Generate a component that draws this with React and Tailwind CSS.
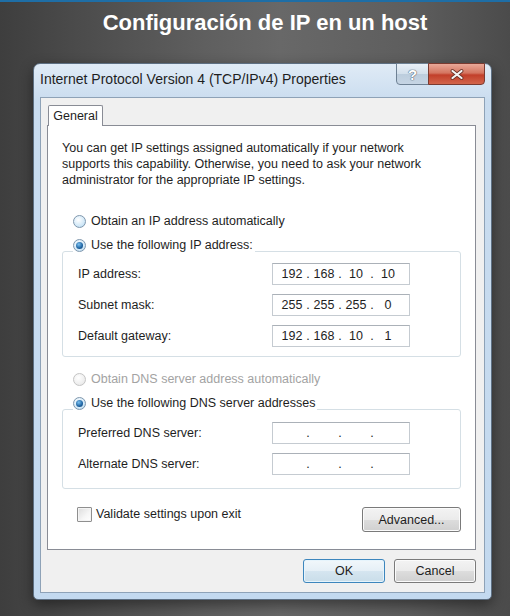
import React from "react";

const Radio = ({ checked, disabled }) => (
  <span
    className={
      disabled
        ? "inline-flex h-[13px] w-[13px] shrink-0 items-center justify-center rounded-full border border-[#c4c4c4] bg-[radial-gradient(circle_at_40%_35%,#ffffff,#ececec_70%,#e0e0e0)]"
        : "inline-flex h-[13px] w-[13px] shrink-0 items-center justify-center rounded-full border border-[#7f97ad] bg-[radial-gradient(circle_at_40%_35%,#ffffff,#cfe7f7_65%,#a9d0ea)]"
    }
  >
    {checked && (
      <span className="h-[7px] w-[7px] rounded-full bg-[radial-gradient(circle_at_40%_35%,#7cc2f2,#1d62a0_60%,#0e3f72)]" />
    )}
  </span>
);

const IpField = ({ parts }) => (
  <div className="flex h-[22px] w-[138px] items-center border border-[#c5cbd1] border-t-[#abb1b8] bg-white pl-[8px] text-[12.5px] leading-none text-[#1e1e1e]">
    <span className="w-[22px] text-center">{parts[0]}</span>
    <span className="w-[10px] text-center">.</span>
    <span className="w-[22px] text-center">{parts[1]}</span>
    <span className="w-[10px] text-center">.</span>
    <span className="w-[22px] text-center">{parts[2]}</span>
    <span className="w-[10px] text-center">.</span>
    <span className="w-[22px] text-center">{parts[3]}</span>
  </div>
);

const FieldRow = ({ label, parts }) => (
  <div className="flex items-center">
    <span className="w-[194px] shrink-0">{label}</span>
    <IpField parts={parts} />
  </div>
);

const RadioRow = ({ checked, disabled, children, onBox }) => (
  <div className="flex h-[16px] items-center pl-[11px]">
    <span
      className={
        onBox
          ? "relative z-10 flex items-center gap-[5px] bg-white pr-[2px]"
          : "flex items-center gap-[5px]"
      }
    >
      <Radio checked={checked} disabled={disabled} />
      <span className={disabled ? "text-[#a3a3a3]" : "text-[#1e1e1e]"}>{children}</span>
    </span>
  </div>
);

const WinButton = ({ children, primary, className }) => (
  <div
    className={
      (primary
        ? "border-[#3d86bd] bg-[linear-gradient(180deg,#f1f7fb_0%,#e5eff6_50%,#d5e5f0_51%,#c9dde9_100%)] shadow-[inset_0_0_0_1px_#e6f4fc] "
        : "border-[#7a7a7a] bg-[linear-gradient(180deg,#f3f3f3_0%,#ebebeb_50%,#dddddd_51%,#d0d0d0_100%)] shadow-[inset_0_0_0_1px_#fbfbfb] ") +
      "flex items-center justify-center rounded-[3px] border text-[12.5px] text-[#1e1e1e] " +
      className
    }
  >
    {children}
  </div>
);

export default function App() {
  return (
    <div className="flex h-[616px] w-[510px] flex-col overflow-hidden border-t-2 border-[#1e6ea6] bg-[linear-gradient(90deg,#3e3e3e_0%,#4b4b4b_15%,#5f5f5f_40%,#686868_55%,#5e5e5e_80%,#4b4b4b_100%)] font-['Liberation_Sans',Arial,sans-serif]">
      <h1 className="pl-[20px] pt-[8px] text-center text-[22px] font-bold leading-[26px] text-white">
        Configuración de IP en un host
      </h1>

      <div className="ml-[33px] mt-[27px] flex h-[537px] w-[459px] flex-col rounded-b-[5px] rounded-t-[7px] border border-[#5d6f82] bg-[linear-gradient(180deg,#e0ebf6_0%,#c9dcef_7%,#c3d9ef_100%)] px-[6px] pb-[6px] shadow-[0_5px_14px_rgba(0,0,0,0.45)]">
        {/* title bar */}
        <div className="flex h-[33px] items-start justify-between">
          <span className="mt-[7px] text-[14px] leading-[16px] text-[#1e1e1e]">
            Internet Protocol Version 4 (TCP/IPv4) Properties
          </span>
          <div className="-mt-[1px] flex h-[22px]">
            <div className="flex w-[33px] items-center justify-center rounded-bl-[4px] border border-[#6e8194] bg-[linear-gradient(180deg,#e9f0f7_0%,#d2dfeb_50%,#bccddd_51%,#c6d5e4_100%)]">
              <span className="text-[15px] font-bold leading-none text-white [text-shadow:0_0_1px_#5a6573,0_0_1px_#5a6573,0_0_1px_#5a6573]">
                ?
              </span>
            </div>
            <div className="-ml-[1px] flex w-[57px] items-center justify-center rounded-br-[4px] border border-[#7a3a30] bg-[linear-gradient(180deg,#e9a898_0%,#d47560_45%,#c23f2a_55%,#d2654b_100%)]">
              <svg width="14" height="11" viewBox="0 0 14 11">
                <path d="M2.5 2 L11.5 9 M11.5 2 L2.5 9" stroke="#6b3026" strokeWidth="3.8" strokeLinecap="round" />
                <path d="M2.5 2 L11.5 9 M11.5 2 L2.5 9" stroke="#f4f4f4" strokeWidth="2.2" strokeLinecap="round" />
              </svg>
            </div>
          </div>
        </div>

        {/* client area */}
        <div className="flex flex-1 flex-col border border-[#8ea2b7] bg-[#f0f0f0] pl-[6px] pr-[8px] pt-[7px] text-[12.5px] leading-[16px] text-[#1e1e1e]">
          <div className="relative z-10 -mb-[1px] ml-[1px] flex h-[21px] w-[55px] items-center justify-center rounded-t-[2px] border border-b-0 border-[#898c95] bg-white">
            General
          </div>
          <div className="flex h-[425px] flex-col border border-[#898c95] bg-white px-[14px] pt-[14px]">
            <p>
              You can get IP settings assigned automatically if your network
              <br />
              supports this capability. Otherwise, you need to ask your network
              <br />
              administrator for the appropriate IP settings.
            </p>

            <div className="mt-[25px]">
              <RadioRow>Obtain an IP address automatically</RadioRow>
            </div>
            <div className="mt-[8px]">
              <RadioRow checked onBox>
                Use the following IP address:
              </RadioRow>
            </div>
            <div className="-mt-[2px] flex flex-col gap-[9px] rounded-[3px] border border-[#d5dfe5] pb-[9px] pl-[15px] pt-[11px]">
              <FieldRow label="IP address:" parts={["192", "168", "10", "10"]} />
              <FieldRow label="Subnet mask:" parts={["255", "255", "255", "0"]} />
              <FieldRow label="Default gateway:" parts={["192", "168", "10", "1"]} />
            </div>

            <div className="mt-[14px]">
              <RadioRow disabled>Obtain DNS server address automatically</RadioRow>
            </div>
            <div className="mt-[8px]">
              <RadioRow checked onBox>
                Use the following DNS server addresses
              </RadioRow>
            </div>
            <div className="-mt-[2px] flex flex-col gap-[9px] rounded-[3px] border border-[#d5dfe5] pb-[13px] pl-[15px] pt-[12px]">
              <FieldRow label="Preferred DNS server:" parts={["", "", "", ""]} />
              <FieldRow label="Alternate DNS server:" parts={["", "", "", ""]} />
            </div>

            <div className="mt-[18px] flex items-start justify-between">
              <div className="ml-[15px] flex items-center gap-[4px]">
                <span className="h-[15px] w-[15px] rounded-[1px] border border-[#8f8f8f] bg-[linear-gradient(135deg,#dcdcdc,#f6f6f6_60%,#ffffff)] shadow-[inset_0_0_0_1px_#f4f4f4]" />
                <span className="leading-[15px]">Validate settings upon exit</span>
              </div>
              <WinButton className="h-[25px] w-[99px]">Advanced...</WinButton>
            </div>
          </div>

          <div className="mt-[9px] flex justify-end gap-[9px]">
            <WinButton primary className="h-[24px] w-[82px]">
              OK
            </WinButton>
            <WinButton className="h-[24px] w-[82px]">Cancel</WinButton>
          </div>
        </div>
      </div>
    </div>
  );
}
